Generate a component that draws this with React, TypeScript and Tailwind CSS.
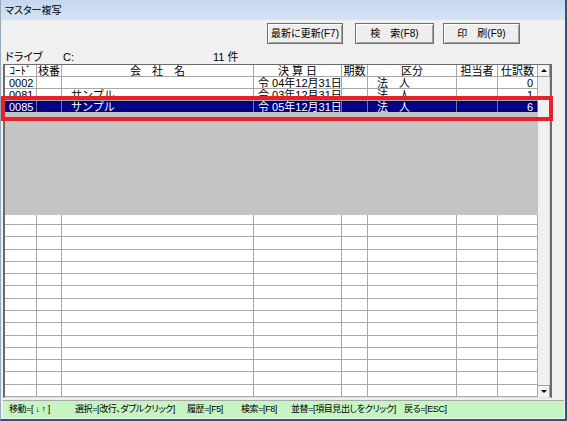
import React from "react";

const FONT = "font-['Liberation_Sans','Noto_Sans_CJK_JP',sans-serif]";

// column widths (px): コード, 枝番, 会社名, 決算日, 期数, 区分, 担当者, 仕訳数
const cols = [
  "w-[32px] pl-[4px] text-left",
  "w-[25px] text-left",
  "w-[192px] pl-[9px] text-left",
  "w-[88px] pl-[4px] text-left",
  "w-[26px] text-left",
  "w-[89px] pl-[9px] text-left",
  "w-[41px] text-left",
  "w-[40px] pr-[4px] text-right",
];

const headers = ["ｺｰﾄﾞ", "枝番", "会　社　名", "決 算 日", "期数", "区分", "担当者", "仕訳数"];
const headerCols = [
  "w-[32px]",
  "w-[25px]",
  "w-[192px]",
  "w-[88px]",
  "w-[26px]",
  "w-[89px]",
  "w-[41px]",
  "w-[40px]",
];

const rows = [
  ["0002", "", "", "令 04年12月31日", "", "法　人", "", "0"],
  ["0081", "", "サンプル", "令 03年12月31日", "", "法　人", "", "1"],
];
const selected = ["0085", "", "サンプル", "令 05年12月31日", "", "法　人", "", "6"];

function DataRow({ cells, active = false }: { cells: string[]; active?: boolean }) {
  return (
    <div
      className={`flex h-[12px] shrink-0 border-b ${
        active ? "border-[#c4c4c4] bg-[#000080] text-white" : "border-[#a8a8a8] bg-white text-black"
      }`}
    >
      {cells.map((c, i) => (
        <div
          key={i}
          className={`${cols[i]} shrink-0 whitespace-nowrap border-r text-[11px] leading-[13px] ${
            active ? "border-[#7070a8]" : "border-[#a8a8a8]"
          }`}
        >
          {c}
        </div>
      ))}
    </div>
  );
}

function EmptyRow({ className = "flex-1" }: { className?: string }) {
  return (
    <div className={`flex ${className} border-b border-[#a8a8a8] bg-white`}>
      {headerCols.map((w, i) => (
        <div key={i} className={`${w} shrink-0 border-r border-[#a8a8a8]`} />
      ))}
    </div>
  );
}

function Button({ label, className }: { label: string; className: string }) {
  return (
    <button
      className={`${className} flex h-[21px] items-center justify-center border border-[#6f6f6f] bg-[#eeeeee] text-[10px] leading-none text-black shadow-[inset_1px_1px_0_#ffffff,inset_-1px_-1px_0_#a0a0a0] [font-feature-settings:'palt']`}
    >
      {label}
    </button>
  );
}

export default function App() {
  const empties = Array.from({ length: 14 });
  return (
    <div className={`relative flex h-[421px] w-[567px] flex-col border-b-2 border-l border-r-2 border-b-[#2f5672] border-l-[#9aa9ba] border-r-[#2f5672] bg-[#f0f0f0] ${FONT}`}>
      {/* title bar */}
      <div className="flex h-[20px] shrink-0 items-center bg-gradient-to-b from-[#c3d7ef] to-[#d5e4f5] pl-[4px] text-[10px] text-black [font-feature-settings:'palt']">
        マスター複写
      </div>

      <div className="flex flex-1 flex-col pl-[2px] pr-[1px] pt-[3px]">
        {/* buttons */}
        <div className="flex h-[21px] shrink-0 pl-[264px]">
          <Button label="最新に更新(F7)" className="w-[76px]" />
          <Button label="検　索(F8)" className="ml-[12px] w-[79px]" />
          <Button label="印　刷(F9)" className="ml-[9px] w-[77px]" />
        </div>

        {/* drive line */}
        <div className="mt-[6px] flex h-[14px] shrink-0 items-center text-[11px] text-black [font-feature-settings:'palt']">
          <span className="w-[60px] pl-[2px]">ドライブ</span>
          <span className="w-[150px]">C:</span>
          <span>11 件</span>
        </div>

        {/* list frame */}
        <div className="flex h-[334px] w-[549px] shrink-0 border-b border-l-2 border-r-2 border-t border-b-[#e0e0e0] border-l-[#6b6b6b] border-r-[#6b6b6b] border-t-[#6b6b6b]">
          <div className="flex w-[533px] shrink-0 flex-col">
            {/* header */}
            <div className="flex h-[12px] shrink-0 border-b border-[#a8a8a8] bg-white">
              {headers.map((h, i) => (
                <div
                  key={i}
                  className={`${headerCols[i]} shrink-0 whitespace-nowrap border-r border-[#a8a8a8] text-center text-[11px] leading-[12px] text-black`}
                >
                  {h}
                </div>
              ))}
            </div>
            {rows.map((r, i) => (
              <DataRow key={i} cells={r} />
            ))}
            <DataRow cells={selected} active />
            <div className="h-[102px] shrink-0 bg-[#c4c4c4]" />
            <EmptyRow className="h-[10px] shrink-0" />
            <div className="flex flex-1 flex-col">
              {empties.map((_, i) => (
                <EmptyRow key={i} />
              ))}
            </div>
          </div>

          {/* scrollbar */}
          <div className="flex w-[12px] shrink-0 flex-col bg-[#f0f0f0]">
            <div className="flex h-[12px] items-center justify-center border-b border-r border-[#a0a0a0] bg-[#f4f4f4]">
              <span className="h-0 w-0 border-x-[3px] border-b-[3px] border-x-transparent border-b-black" />
            </div>
            <div className="flex-1 border-r border-[#dcdcdc]" />
            <div className="flex h-[12px] items-center justify-center border-r border-t border-[#a0a0a0] bg-[#f4f4f4]">
              <span className="h-0 w-0 border-x-[3px] border-t-[3px] border-x-transparent border-t-black" />
            </div>
          </div>
        </div>

        {/* status bar */}
        <div className="mt-[2px] flex h-[18px] shrink-0 items-center whitespace-nowrap border-t border-[#a8a8a8] bg-[#c6f4c3] pl-[6px] text-[9px] tracking-[-0.4px] text-black [font-feature-settings:'palt']">
          <span className="w-[66px] shrink-0">移動=[ ↓ ↑ ]</span>
          <span className="w-[112px] shrink-0">選択=[改行、ダブルクリック]</span>
          <span className="w-[54px] shrink-0">履歴=[F5]</span>
          <span className="w-[50px] shrink-0">検索=[F8]</span>
          <span className="w-[113px] shrink-0">並替=[項目見出しをクリック]</span>
          <span className="shrink-0">戻る=[ESC]</span>
        </div>
      </div>

      {/* highlight annotation */}
      <div className="pointer-events-none absolute left-[0px] top-[96px] h-[25px] w-[552px] border-[4px] border-[#e8202a]" />
    </div>
  );
}
